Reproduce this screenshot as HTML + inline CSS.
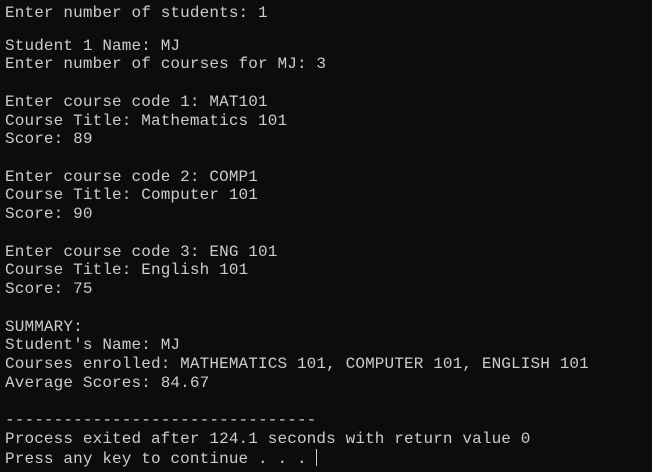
<!DOCTYPE html>
<html><head><meta charset="utf-8"><style>
html,body{margin:0;padding:0;background:#0c0c0c;width:652px;height:472px;overflow:hidden}
pre{position:absolute;left:5px;margin:0;font-family:"Liberation Mono",monospace;font-size:16px;letter-spacing:0.13px;line-height:18.73px;color:#cccccc;white-space:pre}
.cur{display:inline-block;width:1px;height:17px;background:#cccccc;vertical-align:-3px}
</style></head><body>
<pre style="top:3.6px">Enter number of students: 1</pre>
<pre style="top:36.6px">Student 1 Name: MJ
Enter number of courses for MJ: 3

Enter course code 1: MAT101
Course Title: Mathematics 101
Score: 89

Enter course code 2: COMP1
Course Title: Computer 101
Score: 90

Enter course code 3: ENG 101
Course Title: English 101
Score: 75

SUMMARY:
Student's Name: MJ
Courses enrolled: MATHEMATICS 101, COMPUTER 101, ENGLISH 101
Average Scores: 84.67

--------------------------------
Process exited after 124.1 seconds with return value 0
Press any key to continue . . . <span class="cur"></span></pre>
</body></html>
